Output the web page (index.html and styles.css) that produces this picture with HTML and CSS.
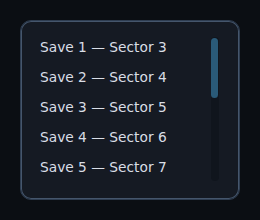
FILE: index.html
```html
<!DOCTYPE html>
<html>
<head>
    <title>Save Slots</title>
    <link rel="stylesheet" href="styles.css">
</head>
<body>
    <div class="panel">
        <ul class="slots">
            <li>Save 1 — Sector 3</li>
            <li>Save 2 — Sector 4</li>
            <li>Save 3 — Sector 5</li>
            <li>Save 4 — Sector 6</li>
            <li>Save 5 — Sector 7</li>
        </ul>
        <div class="track">
            <div class="thumb"></div>
        </div>
    </div>
</body>
</html>
```
FILE: styles.css
```css
body {
    margin: 0;
    width: 260px;
    height: 220px;
    background: #0b0e13;
    font-family: "DejaVu Sans", sans-serif;
}
.panel {
    margin: 20px;
    width: 220px;
    height: 180px;
    box-sizing: border-box;
    border: 1px solid #2e3d51;
    border-radius: 11px;
    box-shadow: inset 0 0 0 1px #45566c;
    background: #151a23;
    display: flex;
}
.slots {
    list-style: none;
    margin: 0;
    padding: 11px 0 0 19px;
    flex: 1;
}
.slots li {
    height: 30px;
    line-height: 30px;
    font-size: 13.75px;
    color: #d9dee6;
}
.track {
    width: 8px;
    height: 144px;
    margin: 16px 20px 0 0;
    border-radius: 4px;
    background: #10151d;
}
.thumb {
    width: 7px;
    height: 60px;
    margin-top: 1px;
    border-radius: 4px;
    background: #2a5a78;
}
```
